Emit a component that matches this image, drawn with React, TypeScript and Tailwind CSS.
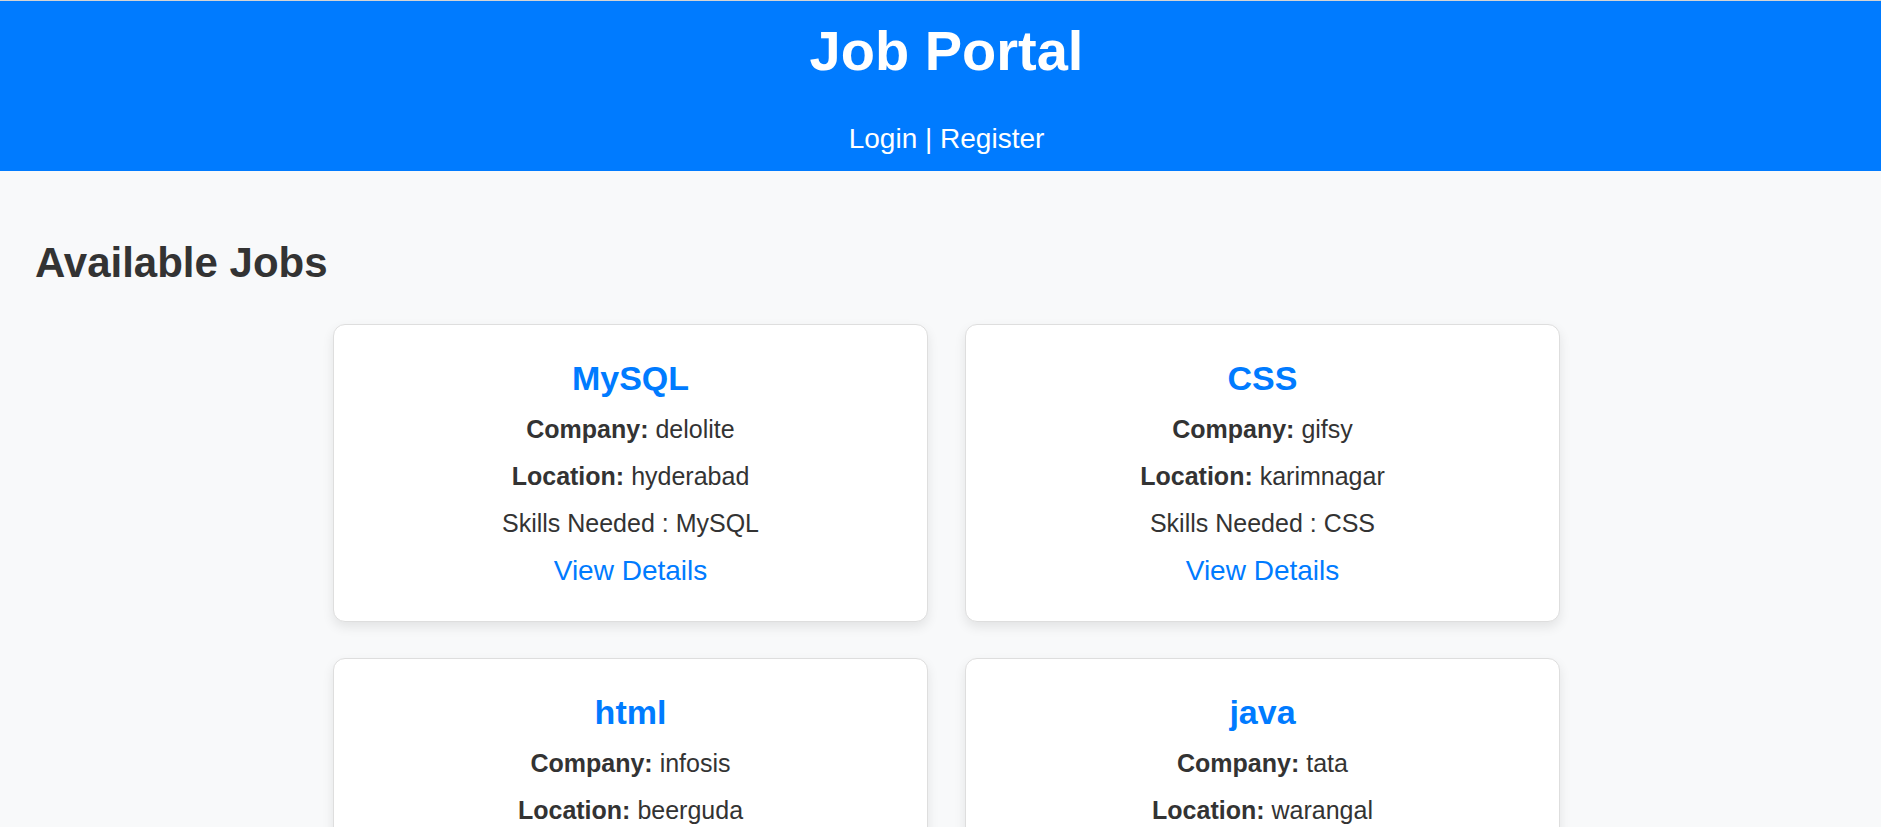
import React from "react";

interface Job {
  title: string;
  company: string;
  location: string;
  skills: string;
}

const jobs: Job[] = [
  { title: "MySQL", company: "delolite", location: "hyderabad", skills: "MySQL" },
  { title: "CSS", company: "gifsy", location: "karimnagar", skills: "CSS" },
  { title: "html", company: "infosis", location: "beerguda", skills: "html" },
  { title: "java", company: "tata", location: "warangal", skills: "java" },
];

function JobCard({ job }: { job: Job }) {
  return (
    <div className="w-[595px] bg-white border border-[#dedede] rounded-[12px] shadow-[0_5px_12px_rgba(0,0,0,0.09)] pt-[34px] pb-[34px] flex flex-col items-center text-center text-[#333]">
      <h3 className="text-[34px] leading-[38px] font-bold text-[#007bff]">{job.title}</h3>
      <p className="mt-[18px] text-[25px] leading-[29px]">
        <strong>Company:</strong> {job.company}
      </p>
      <p className="mt-[18px] text-[25px] leading-[29px]">
        <strong>Location:</strong> {job.location}
      </p>
      <p className="mt-[18px] text-[25px] leading-[29px]">Skills Needed : {job.skills}</p>
      <a href="#" className="mt-[17px] text-[28px] leading-[32px] text-[#007bff]">
        View Details
      </a>
    </div>
  );
}

export default function App() {
  return (
    <div className="min-h-screen bg-[#f8f9fa] font-['Liberation_Sans',Arial,sans-serif] border-t border-[#d4d4d4]">
      <header className="bg-[#007bff] text-white text-center pt-[17px] pb-[16px] pl-[12px]">
        <h1 className="text-[56px] leading-[66px] font-bold">Job Portal</h1>
        <nav className="mt-[39px] text-[28px] leading-[32px]">
          <a href="#">Login</a> | <a href="#">Register</a>
        </nav>
      </header>

      <main className="px-[35px] pt-[67px] pb-10">
        <h2 className="text-[42px] leading-[50px] font-bold text-[#333]">Available Jobs</h2>
        <div className="mt-[36px] flex justify-center pl-[12px]">
          <div className="grid grid-cols-[595px_595px] gap-x-[37px] gap-y-[36px]">
            {jobs.map((job) => (
              <JobCard key={job.title} job={job} />
            ))}
          </div>
        </div>
      </main>
    </div>
  );
}
